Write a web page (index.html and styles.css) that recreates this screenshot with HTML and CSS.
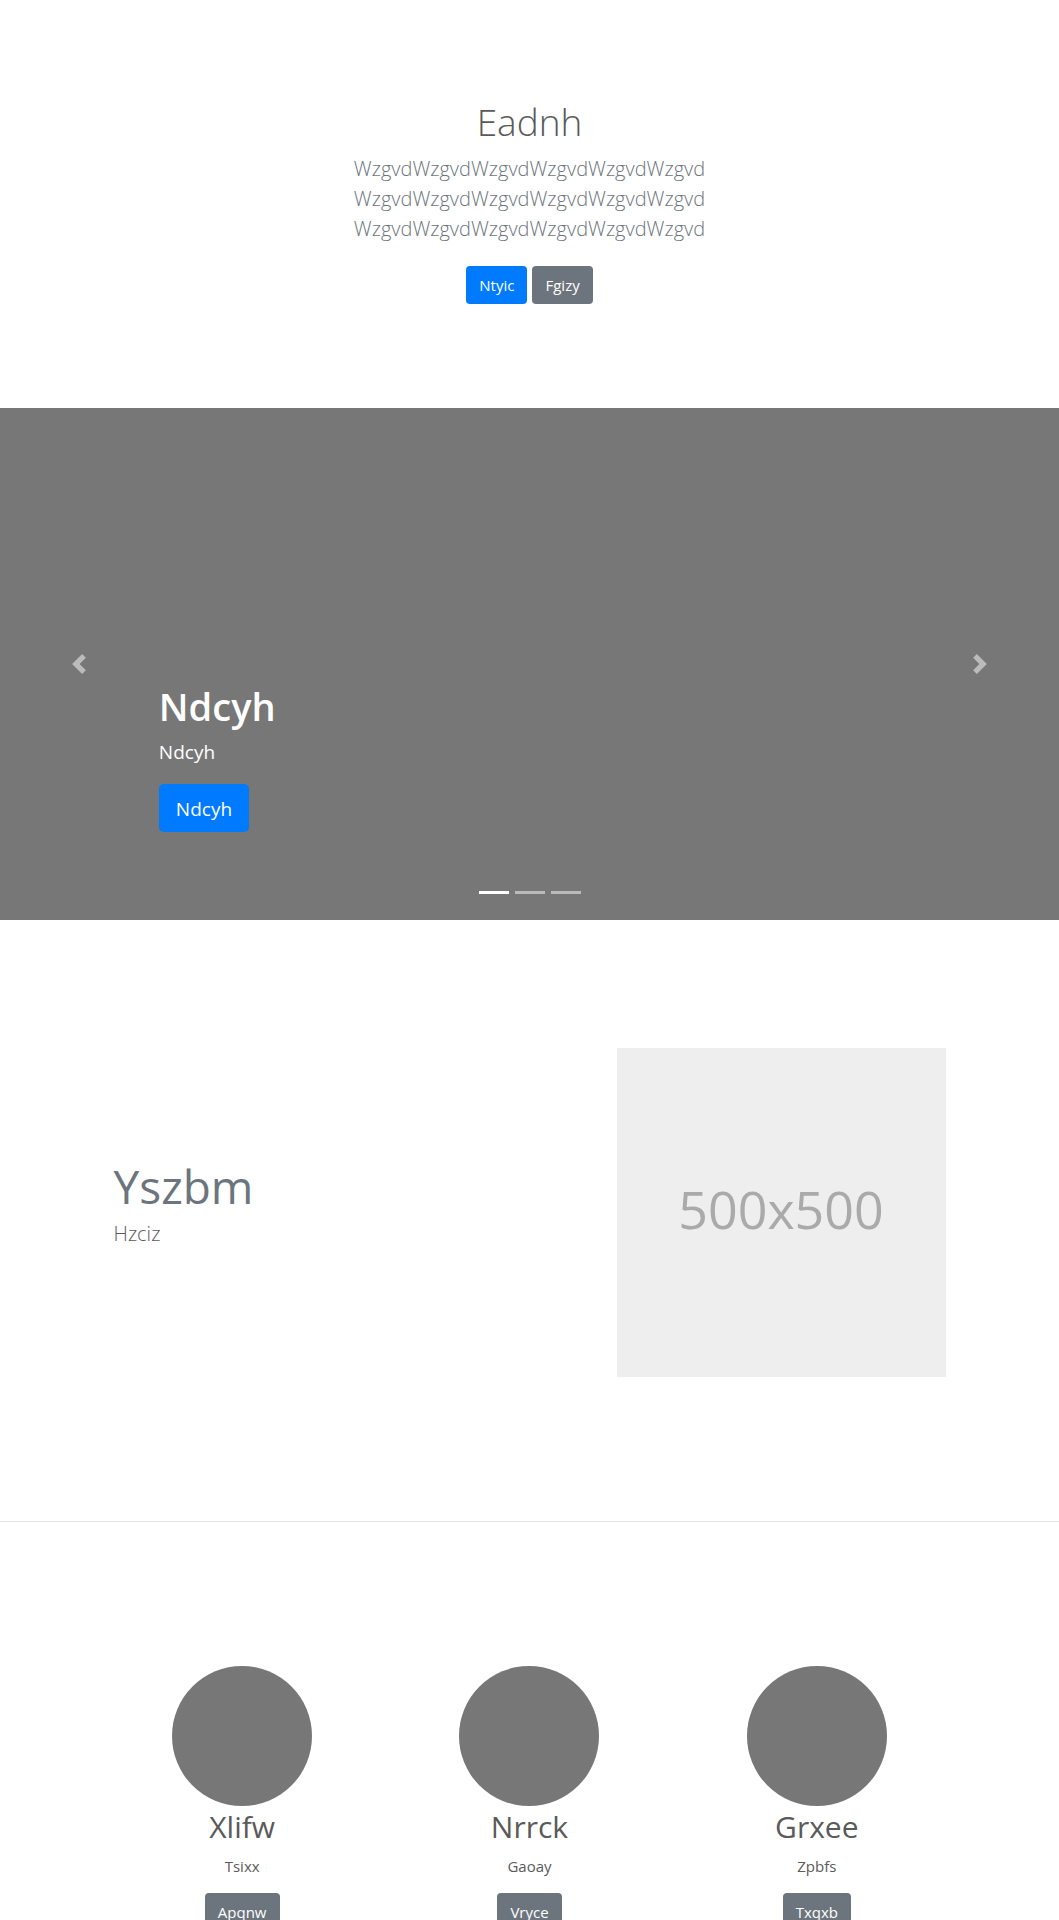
FILE: index.html
```html
<!DOCTYPE html>
<html lang="en">
<head>
<meta charset="utf-8">
<meta name="viewport" content="width=device-width, initial-scale=1">
<title>Eadnh</title>
<link rel="stylesheet" href="styles.css">
</head>
<body>
<main>
  <section class="hero">
    <h1 class="hero-title">Eadnh</h1>
    <p class="lead hero-lead">WzgvdWzgvdWzgvdWzgvdWzgvdWzgvd<br>WzgvdWzgvdWzgvdWzgvdWzgvdWzgvd<br>WzgvdWzgvdWzgvdWzgvdWzgvdWzgvd</p>
    <div class="hero-actions">
      <a href="#" class="btn btn-primary">Ntyic</a>
      <a href="#" class="btn btn-secondary">Fgizy</a>
    </div>
  </section>

  <section class="carousel">
    <button class="carousel-control" type="button" aria-label="Previous">
      <svg width="20" height="20" viewBox="0 0 8 8" fill="#fff"><path d="M5.25 0l-4 4 4 4 1.5-1.5L4.25 4l2.5-2.5L5.25 0z"/></svg>
    </button>
    <div class="carousel-caption">
      <h2 class="carousel-title">Ndcyh</h2>
      <p class="carousel-text">Ndcyh</p>
      <a href="#" class="btn btn-primary btn-lg">Ndcyh</a>
    </div>
    <button class="carousel-control" type="button" aria-label="Next">
      <svg width="20" height="20" viewBox="0 0 8 8" fill="#fff"><path d="M2.75 0l-1.5 1.5L3.75 4l-2.5 2.5L2.75 8l4-4-4-4z"/></svg>
    </button>
    <div class="indicators">
      <button class="indicator active" type="button" aria-label="Slide 1"></button>
      <button class="indicator" type="button" aria-label="Slide 2"></button>
      <button class="indicator" type="button" aria-label="Slide 3"></button>
    </div>
  </section>

  <section class="feature">
    <div class="feature-copy">
      <h2 class="feature-title">Yszbm</h2>
      <p class="lead">Hzciz</p>
    </div>
    <div class="placeholder">500x500</div>
  </section>

  <hr class="divider">

  <section class="people">
    <article class="person">
      <div class="avatar"></div>
      <h2 class="person-name">Xlifw</h2>
      <p class="person-text">Tsixx</p>
      <a href="#" class="btn btn-secondary">Apqnw</a>
    </article>
    <article class="person">
      <div class="avatar"></div>
      <h2 class="person-name">Nrrck</h2>
      <p class="person-text">Gaoay</p>
      <a href="#" class="btn btn-secondary">Vryce</a>
    </article>
    <article class="person">
      <div class="avatar"></div>
      <h2 class="person-name">Grxee</h2>
      <p class="person-text">Zpbfs</p>
      <a href="#" class="btn btn-secondary">Txqxb</a>
    </article>
  </section>
</main>
</body>
</html>
```

FILE: styles.css
```css
* { box-sizing: border-box; }

body {
  margin: 0;
  background: #fff;
  color: #5a5a5a;
  font: 400 15px/24px "Open Sans", "Noto Sans", sans-serif;
}

h1, h2, p { margin: 0; }

.lead {
  font-size: 20px;
  line-height: 30px;
  font-weight: 300;
}

.btn {
  display: inline-block;
  padding: 7px 13px;
  border-radius: 4px;
  color: #fff;
  text-decoration: none;
}
.btn-primary { background: #007bff; }
.btn-secondary { background: #6c757d; }
.btn-lg {
  padding: 10px 17px 8px;
  border-radius: 5px;
  font-size: 19px;
  line-height: 30px;
}

.hero {
  padding: 98px 16px 104px;
  text-align: center;
}
.hero-title {
  margin-bottom: 8px;
  font-size: 37px;
  line-height: 48px;
  font-weight: 300;
}
.hero-lead {
  margin-bottom: 22px;
  color: #6c757d;
}
.hero-actions {
  display: flex;
  justify-content: center;
  gap: 5px;
}

.carousel {
  position: relative;
  display: flex;
  align-items: stretch;
  min-height: 512px;
  background: #777;
  color: #fff;
}
.carousel-control {
  display: flex;
  align-items: center;
  justify-content: center;
  width: 15%;
  padding: 0;
  border: 0;
  background: none;
  opacity: .5;
}
.carousel-caption {
  flex: 1;
  align-self: flex-end;
  padding-bottom: 88px;
}
.carousel-title {
  margin-bottom: 8px;
  font-size: 38px;
  line-height: 48px;
  font-weight: 600;
}
.carousel-text {
  margin-bottom: 18px;
  font-size: 19px;
  line-height: 28px;
}
.carousel-caption .btn { display: table; }
.indicators {
  position: absolute;
  right: 0;
  bottom: 26px;
  left: 0;
  display: flex;
  justify-content: center;
  gap: 6px;
}
.indicator {
  width: 30px;
  height: 3px;
  padding: 0;
  border: 0;
  background: #fff;
  opacity: .5;
}
.indicator.active { opacity: 1; }

.feature {
  display: flex;
  align-items: center;
  justify-content: space-between;
  max-width: 864px;
  margin: 0 auto;
  padding: 128px 16px 144px;
}
.feature-copy { padding-bottom: 16px; }
.feature-title {
  margin-bottom: 8px;
  color: #6c757d;
  font-size: 46px;
  line-height: 50px;
  font-weight: 400;
}
.placeholder {
  display: flex;
  align-items: center;
  justify-content: center;
  width: 329px;
  aspect-ratio: 1;
  padding-bottom: 8px;
  background: #eee;
  color: #aaa;
  font-size: 52px;
}

.divider {
  margin: 0;
  border: 0;
  border-top: 1px solid #e5e5e5;
}

.people {
  display: grid;
  grid-template-columns: repeat(3, 1fr);
  max-width: 862px;
  margin: 0 auto;
  padding: 144px 0 64px;
  text-align: center;
}
.avatar {
  width: 140px;
  height: 140px;
  margin: 0 auto;
  border-radius: 50%;
  background: #777;
}
.person-name {
  margin: 2px 0 8px;
  font-size: 30px;
  line-height: 38px;
  font-weight: 400;
}
.person-text { margin-bottom: 15px; }
```
